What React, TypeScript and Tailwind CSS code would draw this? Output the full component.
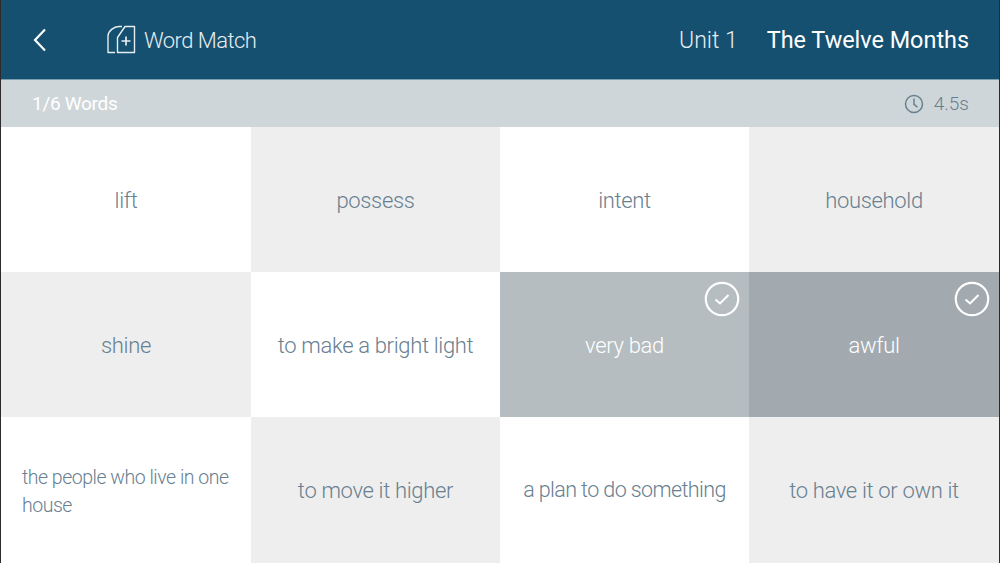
type Cell = { text: string; tone: "white" | "gray" | "matchA" | "matchB"; fit?: "left" | "small" };

const cells: Cell[] = [
  { text: "lift", tone: "white" },
  { text: "possess", tone: "gray" },
  { text: "intent", tone: "white" },
  { text: "household", tone: "gray" },
  { text: "shine", tone: "gray" },
  { text: "to make a bright light", tone: "white" },
  { text: "very bad", tone: "matchA" },
  { text: "awful", tone: "matchB" },
  { text: "the people who live in one house", tone: "white", fit: "left" },
  { text: "to move it higher", tone: "gray" },
  { text: "a plan to do something", tone: "white", fit: "small" },
  { text: "to have it or own it", tone: "gray" },
];

const toneClass = {
  white: "bg-white text-[#688090]",
  gray: "bg-[#eeeeee] text-[#688090]",
  matchA: "bg-[#b5bdc0] text-white",
  matchB: "bg-[#a2aab0] text-white",
};

const fitClass = {
  left: "pl-[21px] pr-[10px] pt-[3px] text-[19.5px] leading-[28px] tracking-[-0.025em]",
  small: "justify-center pt-[1px] text-center text-[21.5px] tracking-[-0.028em]",
  normal: "justify-center pt-[1px] text-center text-[22px] tracking-[-0.015em]",
};

function BackIcon() {
  return (
    <svg className="ml-[31px]" width="16" height="24" viewBox="0 0 16 24" fill="none" stroke="white" strokeWidth="2.2">
      <path d="M13 1.500L3 12l10 10.500" />
    </svg>
  );
}

function CardsIcon() {
  return (
    <svg width="30" height="30" viewBox="0 0 30 30" fill="none" stroke="#e6edf1" strokeWidth="1.4">
      <path d="M19 1.500H28.500V27.500H11.500V12.500Z" strokeLinejoin="round" />
      <path d="M16 1.500H13C8 1.500 2 6 2 11V27.500H9" strokeLinejoin="round" />
      <path d="M20 11.500V20.500M15.500 16H24.500" strokeWidth="1.700" />
    </svg>
  );
}

function ClockIcon() {
  return (
    <svg width="20" height="20" viewBox="0 0 20 20" fill="none" stroke="#688090" strokeWidth="1.500">
      <circle cx="10" cy="10" r="8.500" />
      <path d="M10 4.500v5.800l3.500 3" />
    </svg>
  );
}

function CheckBadge() {
  return (
    <svg className="absolute right-[9px] top-[9px]" width="36" height="36" viewBox="0 0 36 36" fill="none" stroke="white">
      <circle cx="18" cy="18" r="16.200" strokeWidth="2.200" />
      <path d="M11.500 18.500l4.500 4 8.500-8.500" strokeWidth="2" />
    </svg>
  );
}

export default function App() {
  return (
    <div className="flex h-[563px] w-[1000px] flex-col overflow-hidden bg-[#2b2b2b] px-px font-['Roboto',sans-serif] font-light">
      <header className="flex h-[79px] shrink-0 items-center bg-[#165070] pr-[30px] text-[#e6edf1]">
        <BackIcon />
        <div className="ml-[58px] flex items-center gap-[8px]">
          <CardsIcon />
          <span className="pt-[2px] text-[22px] leading-none tracking-[-0.025em]">Word Match</span>
        </div>
        <span className="ml-auto pt-[2px] text-[23px] leading-none">Unit 1</span>
        <span className="ml-[29px] pt-[2px] text-[23.4px] font-normal leading-none text-white">The Twelve Months</span>
      </header>
      <div className="flex h-[48px] shrink-0 items-center justify-between border-t border-[#7d9db0] bg-[#cfd6d9] pl-[31px] pr-[30px]">
        <span className="text-[19px] font-normal leading-none tracking-[-0.015em] text-white">1/6 Words</span>
        <span className="flex items-center gap-[10px] text-[19px] leading-none text-[#688090]">
          <ClockIcon />
          4.5s
        </span>
      </div>
      <div className="grid flex-1 grid-cols-[250px_249px_249px_250px] grid-rows-[145px_145px_146px]">
        {cells.map((c) => (
          <div key={c.text} className={`relative flex items-center ${toneClass[c.tone]} ${fitClass[c.fit ?? "normal"]}`}>
            {(c.tone === "matchA" || c.tone === "matchB") && <CheckBadge />}
            <span>{c.text}</span>
          </div>
        ))}
      </div>
    </div>
  );
}
